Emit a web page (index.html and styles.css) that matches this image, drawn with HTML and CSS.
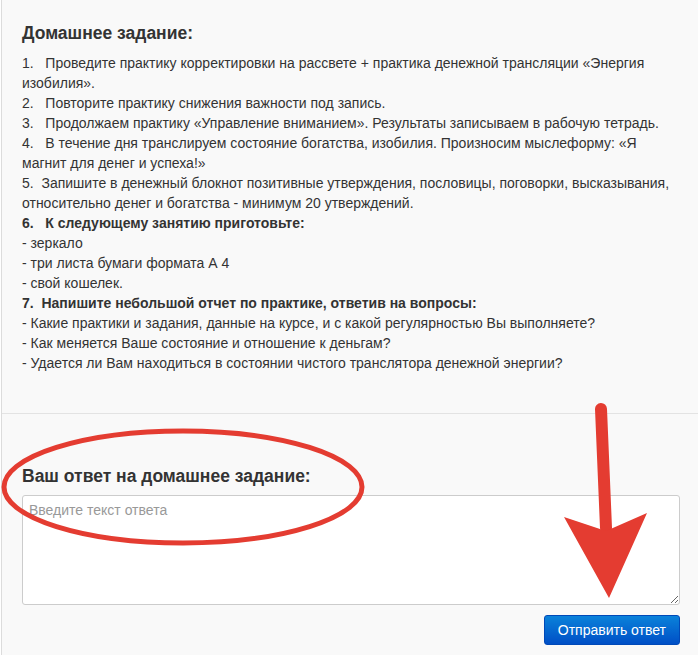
FILE: index.html
```html
<!DOCTYPE html>
<html lang="ru">
<head>
  <meta charset="UTF-8">
  <title>Домашнее задание</title>
  <link rel="stylesheet" href="styles.css">
</head>
<body>
  <div class="panel">
    <div class="task">
      <h3>Домашнее задание:</h3>
      <p>1.&nbsp;&nbsp; Проведите практику корректировки на рассвете + практика денежной трансляции «Энергия изобилия».</p>
      <p>2.&nbsp;&nbsp; Повторите практику снижения важности под запись.</p>
      <p>3.&nbsp;&nbsp; Продолжаем практику «Управление вниманием». Результаты записываем в рабочую тетрадь.</p>
      <p>4.&nbsp;&nbsp; В течение дня транслируем состояние богатства, изобилия. Произносим мыслеформу: «Я магнит для денег и успеха!»</p>
      <p>5.&nbsp; Запишите в денежный блокнот позитивные утверждения, пословицы, поговорки, высказывания, относительно денег и богатства - минимум 20 утверждений.</p>
      <p><strong>6.&nbsp;&nbsp; К следующему занятию приготовьте:</strong></p>
      <p>- зеркало</p>
      <p>- три листа бумаги формата А 4</p>
      <p>- свой кошелек.</p>
      <p><strong>7.&nbsp; Напишите небольшой отчет по практике, ответив на вопросы:</strong></p>
      <p>- Какие практики и задания, данные на курсе, и с какой регулярностью Вы выполняете?</p>
      <p>- Как меняется Ваше состояние и отношение к деньгам?</p>
      <p>- Удается ли Вам находиться в состоянии чистого транслятора денежной энергии?</p>
    </div>

    <div class="answer">
      <h3>Ваш ответ на домашнее задание:</h3>
      <textarea class="answer-text" placeholder="Введите текст ответа"></textarea>
      <div class="actions">
        <button class="btn-send">Отправить ответ</button>
      </div>
    </div>

    <!-- пометки поверх скриншота -->
    <svg class="marks" width="698" height="655" viewBox="0 0 698 655">
      <ellipse cx="183" cy="487" rx="179" ry="56" fill="none" stroke="#e43c31" stroke-width="5"/>
      <line x1="601" y1="409" x2="606" y2="528" stroke="#e43c31" stroke-width="12" stroke-linecap="round"/>
      <polygon points="564,517 606,531 647,513 609,598" fill="#e43c31"/>
    </svg>
  </div>
</body>
</html>
```

FILE: styles.css
```css
body {
  margin: 0;
  background-color: #fff;
  font-family: "Liberation Sans", Arial, sans-serif;
  color: #333;
}
.panel {
  position: relative;
  margin-left: 1px;
  min-height: 655px;
  background-color: #f9f9f9;
  border-left: 1px solid #dcdcdc;
}
h3 {
  margin: 0;
  font-size: 17.5px;
  line-height: 20px;
  font-weight: bold;
  color: #333;
}
.task {
  padding: 23px 21px 40px 20px;
}
.task h3 {
  margin-bottom: 10px;
}
.task p {
  margin: 0;
  font-size: 14px;
  line-height: 20px;
}
.answer {
  border-top: 1px solid #e3e3e3;
  padding: 52px 18px 0 20px;
}
.answer h3 {
  margin-bottom: 9px;
}
.answer-text {
  display: block;
  box-sizing: border-box;
  width: 100%;
  height: 110px;
  margin: 0;
  padding: 4px 6px;
  border: 1px solid #ccc;
  border-radius: 3px;
  background: #fff;
  font-family: "Liberation Sans", Arial, sans-serif;
  font-size: 14px;
  line-height: 20px;
  color: #333;
  resize: vertical;
}
.answer-text::placeholder {
  color: #999;
}
.actions {
  display: flex;
  justify-content: flex-end;
  margin-top: 10px;
}
.btn-send {
  height: 30px;
  padding: 0 13px;
  border: 1px solid #0049b8;
  border-radius: 3px;
  background: linear-gradient(#0a82da, #004fc6);
  color: #fff;
  font-family: "Liberation Sans", Arial, sans-serif;
  font-size: 14px;
}
.marks {
  position: absolute;
  left: -2px;
  top: 0;
  pointer-events: none;
}
```
